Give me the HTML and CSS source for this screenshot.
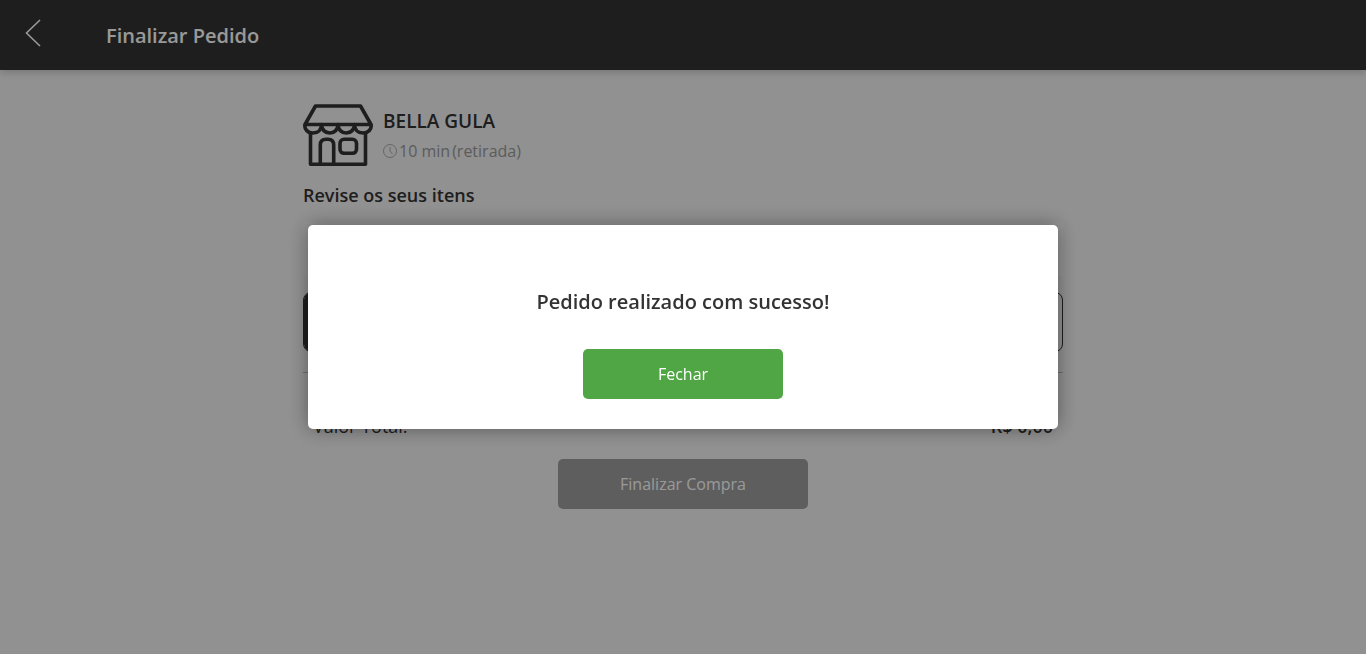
FILE: index.html
```html
<!DOCTYPE html>
<html lang="pt-BR">
<head>
<meta charset="utf-8">
<meta name="viewport" content="width=device-width, initial-scale=1">
<title>Finalizar Pedido</title>
<link rel="stylesheet" href="styles.css">
</head>
<body>
<header class="topbar">
  <button class="back" type="button" aria-label="Voltar">
    <svg class="back-icon" viewBox="0 0 18 30" fill="none" stroke="currentColor" stroke-width="1.600"><path d="M16 2 2.500 15 16 28"/></svg>
  </button>
  <h1 class="topbar-title">Finalizar Pedido</h1>
</header>
<main class="checkout">
  <section class="store">
    <svg class="store-icon" viewBox="0 0 70 62" fill="none" stroke="currentColor" stroke-width="3.600" stroke-linejoin="round" aria-hidden="true">
      <path d="M12.500 2H57.500L68 20.500H2Z"/>
      <path d="M2 20.500C1 25.500 5 29 10 29C15 29 18.500 25.500 18.500 20.500C18.500 25.500 22 29 26.700 29C31.500 29 35 25.500 35 20.500C35 25.500 38.500 29 43.300 29C48 29 51.500 25.500 51.500 20.500C51.500 25.500 55 29 60 29C65 29 69 25.500 68 20.500"/>
      <path d="M7.500 28V60.200H62.500V28M17.300 60V41Q17.300 35.300 23 35.300H25Q30.700 35.300 30.700 41V60"/>
      <rect x="37" y="35.300" width="16.500" height="14" rx="4"/>
    </svg>
    <div class="store-info">
      <h2 class="store-name">BELLA GULA</h2>
      <p class="store-time">
        <svg class="clock" viewBox="0 0 14 14" fill="none" stroke="currentColor" stroke-width=".8" aria-hidden="true"><circle cx="7" cy="7" r="6.500"/><path d="M7 3v4l2.500 3"/></svg>
        <span>10 min</span><span class="pickup">(retirada)</span>
      </p>
    </div>
  </section>
  <h2 class="review">Revise os seus itens</h2>
  <div class="items"></div>
  <div class="modes">
    <button class="mode mode-active" type="button" aria-label="Retirada"></button>
    <button class="mode" type="button" aria-label="Entrega"></button>
  </div>
  <div class="total">
    <span>Valor Total:</span><strong class="total-value">R$ 0,00</strong>
  </div>
  <button class="button submit" type="button">Finalizar Compra</button>
</main>
<div class="overlay">
  <div class="dialog" role="dialog" aria-modal="true" aria-labelledby="dialog-title">
    <h2 class="dialog-title" id="dialog-title">Pedido realizado com sucesso!</h2>
    <button class="button close" type="button">Fechar</button>
  </div>
</div>
</body>
</html>
```
FILE: styles.css
```css
* { box-sizing: border-box; }
body {
  margin: 0;
  background: #f2f2f2;
  color: #333;
  font: 16px/24px "Open Sans", sans-serif;
}
h1, h2, p { margin: 0; font-weight: 600; }
button { font: inherit; border: 0; cursor: pointer; }
.topbar {
  display: flex;
  align-items: center;
  height: 70px;
  padding: 0 24px;
  background: #333;
  color: #fff;
  box-shadow: 0 2px 8px rgba(0, 0, 0, .2);
}
.back {
  width: 82px;
  padding: 0 0 4px;
  background: none;
  color: inherit;
  text-align: left;
}
.back-icon { display: block; width: 18px; height: 30px; }
.topbar-title { padding-top: 2px; font-size: 20px; }
.checkout {
  display: flex;
  flex-direction: column;
  width: 100%;
  max-width: 760px;
  margin: 0 auto;
  padding-top: 34px;
}
.store { display: flex; gap: 10px; }
.store-icon { width: 70px; height: 62px; }
.store-info { padding-top: 4px; }
.store-name { font-size: 19px; line-height: 26px; }
.store-time {
  display: flex;
  align-items: center;
  gap: 2px;
  padding-top: 5px;
  color: #999;
  font-weight: 400;
}
.clock { width: 14px; height: 14px; }
.review { margin-top: 16px; font-size: 18px; line-height: 26px; }
.items { height: 54px; margin-top: 14px; background: #f8f8f8; }
.modes {
  display: flex;
  height: 60px;
  margin-top: 16px;
  overflow: hidden;
  border: 1px solid #333;
  border-radius: 8px;
}
.mode { flex: 1; background: transparent; }
.mode-active { background: #333; }
.total {
  display: flex;
  justify-content: space-between;
  margin-top: 20px;
  padding: 40px 10px 20px;
  border-top: 1px solid #bbb;
  font-size: 18px;
  line-height: 26px;
}
.total-value { font-weight: 600; }
.button { height: 50px; border-radius: 5px; }
.submit {
  align-self: center;
  width: 250px;
  background: #9d9d9d;
  color: #fff;
}
.overlay {
  position: fixed;
  inset: 0;
  display: flex;
  align-items: center;
  justify-content: center;
  background: rgba(0, 0, 0, .4);
}
.dialog {
  display: flex;
  flex-direction: column;
  align-items: center;
  gap: 32px;
  width: 100%;
  max-width: 750px;
  padding: 62px 30px 30px;
  border-radius: 5px;
  background: #fff;
  box-shadow: 0 0 20px rgba(0, 0, 0, .4);
}
.dialog-title { font-size: 20px; line-height: 30px; }
.close { width: 200px; background: #50a545; color: #fff; }
```
